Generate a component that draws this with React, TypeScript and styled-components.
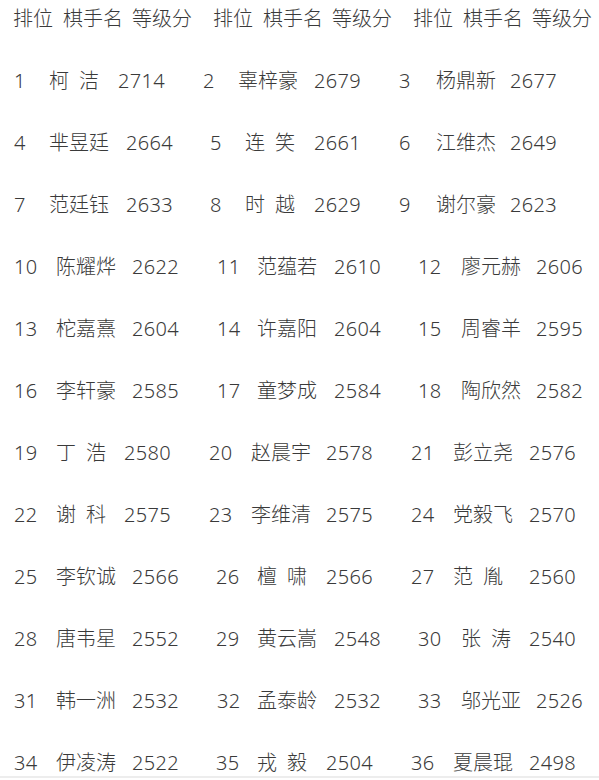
import { createGlobalStyle, styled } from "styled-components";

const GlobalStyle = createGlobalStyle`
  html, body {
    margin: 0;
    padding: 0;
    background: #fff;
  }
  body {
    font-family: "Noto Sans", "Noto Sans CJK SC", sans-serif;
    font-weight: 300;
    color: #3a3a3a;
  }
`;

const Page = styled.div`
  width: 599px;
  height: 780px;
  overflow: hidden;
  background: #fff;
  display: flex;
  flex-direction: column;
`;

const List = styled.div`
  height: 776px;
  overflow: hidden;
  flex: none;
`;

const Row = styled.div<{ $pad: number }>`
  height: 62px;
  box-sizing: border-box;
  padding: 6px 0 0 ${(p) => p.$pad}px;
  display: flex;
  align-items: flex-start;
  font-size: 20px;
  line-height: 26px;
`;

const Cell = styled.span<{ $w: number; $spacing: number }>`
  flex: none;
  width: ${(p) => p.$w}px;
  white-space: nowrap;
  letter-spacing: ${(p) => p.$spacing}px;
`;

const Divider = styled.div`
  height: 2px;
  background: #ededed;
  flex: none;
`;

// ink-left x of each of the 9 columns, per row
const HEAD = [14, 64, 133, 214, 264, 333, 414, 464, 533];
const L1 = [15, 50, 119, 204, 239, 315, 400, 437, 511];
const L2 = [15, 50, 127, 211, 246, 315, 400, 437, 511];
const L3 = [15, 57, 133, 218, 258, 335, 419, 462, 537];
const L4 = [15, 57, 125, 210, 252, 327, 412, 454, 530];
const L5 = [15, 57, 133, 217, 258, 327, 412, 454, 530];
const L6 = [15, 57, 133, 217, 258, 335, 419, 462, 530];

type Player = [number, string, number];

const rows: { xs: number[]; players: Player[] }[] = [
  { xs: L1, players: [[1, "柯洁", 2714], [2, "辜梓豪", 2679], [3, "杨鼎新", 2677]] },
  { xs: L2, players: [[4, "芈昱廷", 2664], [5, "连笑", 2661], [6, "江维杰", 2649]] },
  { xs: L2, players: [[7, "范廷钰", 2633], [8, "时越", 2629], [9, "谢尔豪", 2623]] },
  { xs: L3, players: [[10, "陈耀烨", 2622], [11, "范蕴若", 2610], [12, "廖元赫", 2606]] },
  { xs: L3, players: [[13, "柁嘉熹", 2604], [14, "许嘉阳", 2604], [15, "周睿羊", 2595]] },
  { xs: L3, players: [[16, "李轩豪", 2585], [17, "童梦成", 2584], [18, "陶欣然", 2582]] },
  { xs: L4, players: [[19, "丁浩", 2580], [20, "赵晨宇", 2578], [21, "彭立尧", 2576]] },
  { xs: L4, players: [[22, "谢科", 2575], [23, "李维清", 2575], [24, "党毅飞", 2570]] },
  { xs: L5, players: [[25, "李钦诚", 2566], [26, "檀啸", 2566], [27, "范胤", 2560]] },
  { xs: L6, players: [[28, "唐韦星", 2552], [29, "黄云嵩", 2548], [30, "张涛", 2540]] },
  { xs: L3, players: [[31, "韩一洲", 2532], [32, "孟泰龄", 2532], [33, "邬光亚", 2526]] },
  { xs: L5, players: [[34, "伊凌涛", 2522], [35, "戎毅", 2504], [36, "夏晨琨", 2498]] },
];

const widths = (xs: number[]) =>
  xs.map((x, i) => (i < xs.length - 1 ? xs[i + 1] - x : 599 - x));

// two-character names are written with a gap between the characters
const spacingFor = (t: string) => {
  if (/^\d+$/.test(t)) return 0.3;
  if (t.length === 2 && t !== "排位") return 10;
  return 0;
};

const TableRow = ({ xs, texts }: { xs: number[]; texts: string[] }) => {
  const ws = widths(xs);
  return (
    <Row $pad={xs[0] - 1}>
      {texts.map((t, i) => (
        <Cell key={i} $w={ws[i]} $spacing={spacingFor(t)}>
          {t}
        </Cell>
      ))}
    </Row>
  );
};

const App = () => {
  const header = ["排位", "棋手名", "等级分", "排位", "棋手名", "等级分", "排位", "棋手名", "等级分"];
  return (
    <Page>
      <GlobalStyle />
      <List>
        <TableRow xs={HEAD} texts={header} />
        {rows.map((r, i) => (
          <TableRow
            key={i}
            xs={r.xs}
            texts={r.players.flatMap(([rank, name, rating]) => [String(rank), name, String(rating)])}
          />
        ))}
      </List>
      <Divider />
    </Page>
  );
};

export default App;
